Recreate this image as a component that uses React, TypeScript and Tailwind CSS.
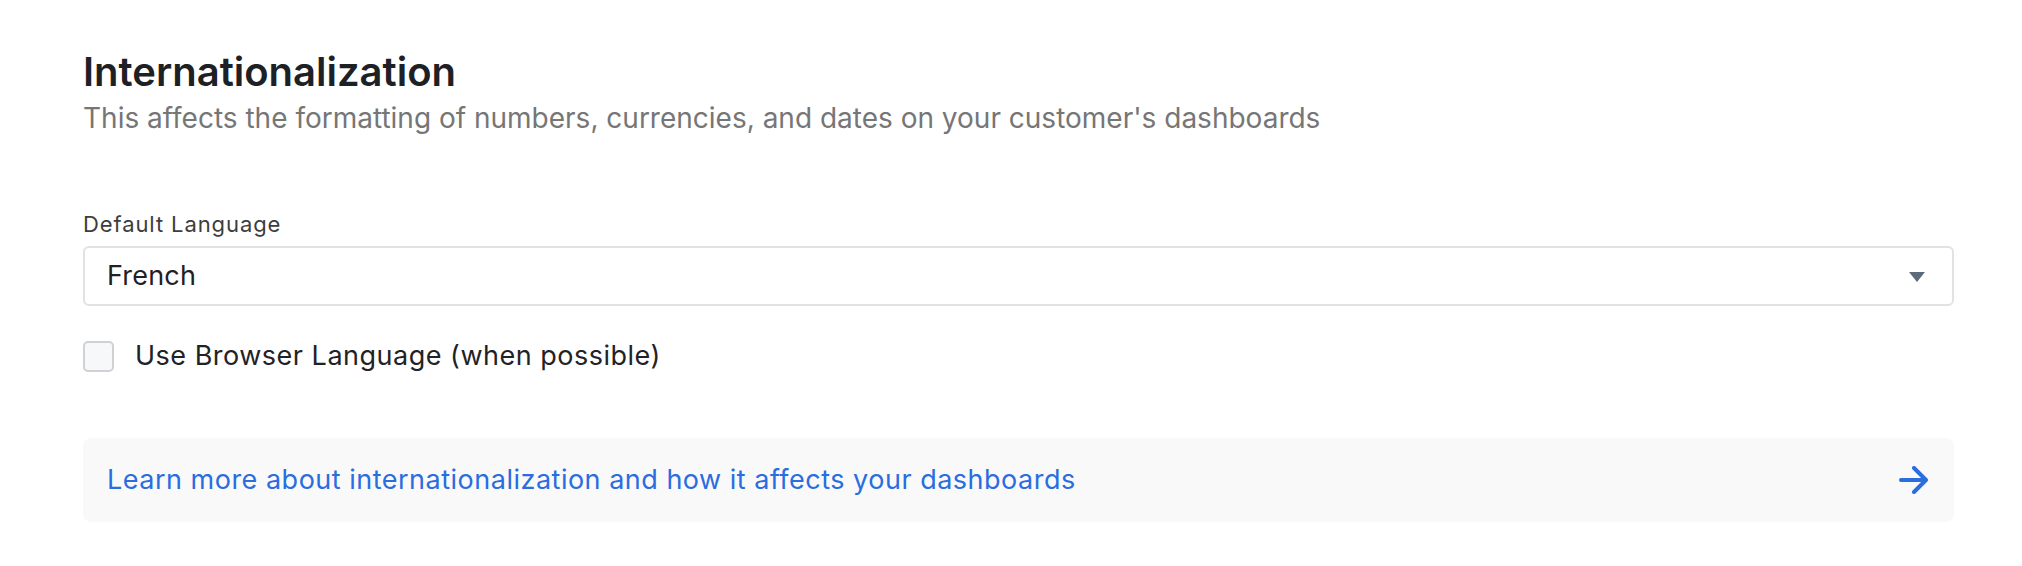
import React, { useState } from "react";

const languages = ["English", "French", "German", "Spanish", "Japanese"];

const App: React.FC = () => {
  const [language, setLanguage] = useState("French");
  const [useBrowser, setUseBrowser] = useState(false);

  return (
    <div
      className="w-[2022px] h-[566px] bg-white pl-[83px] pt-[48px]"
      style={{ fontFamily: "Inter, 'Noto Sans', sans-serif" }}
    >
      <div className="w-[1871px] flex flex-col">
        <h1 className="text-[40px] leading-[48px] font-semibold text-[#1d2126]">
          Internationalization
        </h1>
        <p className="mt-[5px] text-[28px] leading-[34px] text-[#767676]">
          This affects the formatting of numbers, currencies, and dates on your customer's dashboards
        </p>

        <label className="mt-[76px] text-[22px] leading-[26px] tracking-[0.9px] text-[#3d3d3d]">
          Default Language
        </label>
        <div className="relative mt-[9px] h-[60px] rounded-[6px] border-2 border-[#e2e2e2] bg-white flex items-center">
          <select
            value={language}
            onChange={(e) => setLanguage(e.target.value)}
            className="appearance-none w-full h-full bg-transparent pl-[22px] pr-[60px] text-[27px] leading-[32px] tracking-[0.2px] text-[#1f2124] outline-none"
          >
            {languages.map((l) => (
              <option key={l} value={l}>
                {l}
              </option>
            ))}
          </select>
          <svg
            className="absolute right-[27px] top-[24px] pointer-events-none"
            width="16"
            height="10"
            viewBox="0 0 16 10"
          >
            <path d="M0 0 H16 L8 10 Z" fill="#5b6b7a" />
          </svg>
        </div>

        <label className="mt-[34px] flex items-center gap-[21px] cursor-pointer">
          <input
            type="checkbox"
            checked={useBrowser}
            onChange={(e) => setUseBrowser(e.target.checked)}
            className="appearance-none w-[31px] h-[31px] rounded-[5px] border-2 border-[#cfd1d4] bg-[#f7f8fa]"
          />
          <span className="text-[27px] leading-[32px] tracking-[0.5px] text-[#1f2328]">
            Use Browser Language (when possible)
          </span>
        </label>

        <a
          href="#"
          className="mt-[66px] h-[84px] rounded-[8px] bg-[#f9f9f9] pl-[24px] pr-[25px] flex items-center justify-between"
        >
          <span className="text-[27px] leading-[32px] tracking-[0.5px] text-[#2a6ddf]">
            Learn more about internationalization and how it affects your dashboards
          </span>
          <svg width="30" height="28" viewBox="0 0 30 28" fill="none">
            <path
              d="M2 14 H27 M15 2 L27 14 L15 26"
              stroke="#2a6ddf"
              strokeWidth="4"
              strokeLinecap="round"
              strokeLinejoin="round"
            />
          </svg>
        </a>
      </div>
    </div>
  );
};

export default App;
